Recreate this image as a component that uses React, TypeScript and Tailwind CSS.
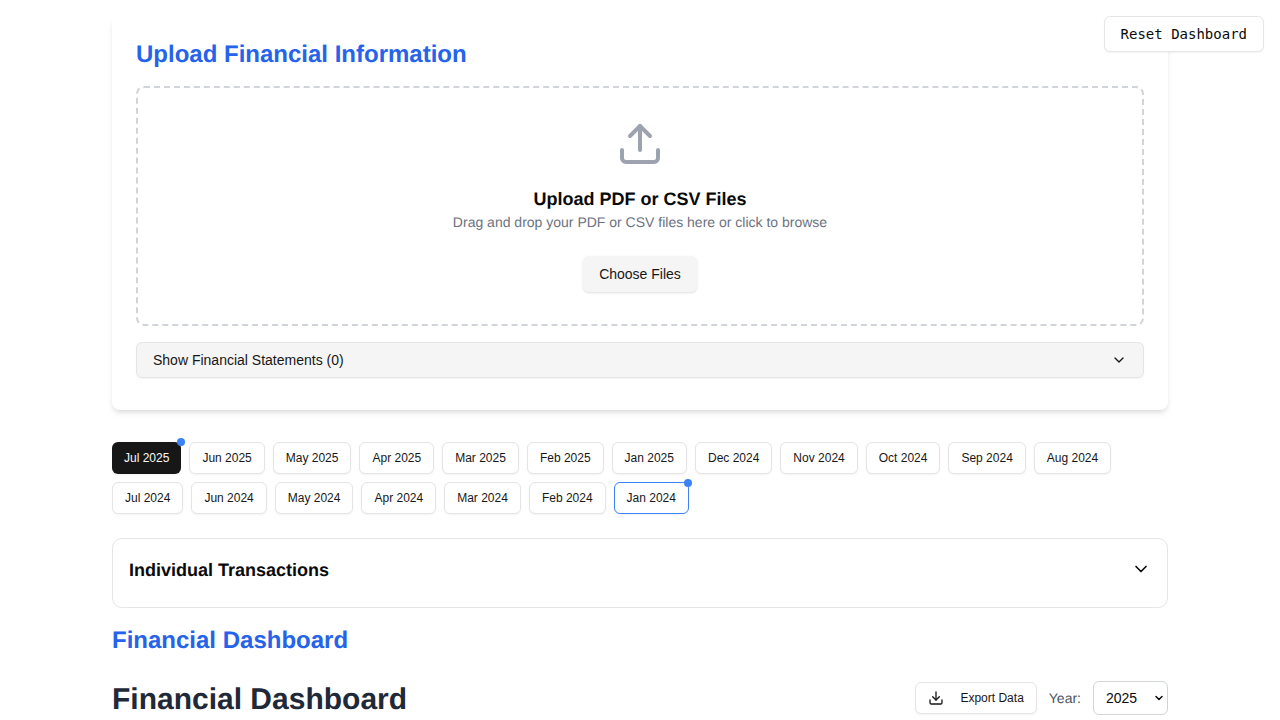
import { ChevronDown, Download, Upload } from "lucide-react";

const row1 = ["Jul 2025", "Jun 2025", "May 2025", "Apr 2025", "Mar 2025", "Feb 2025", "Jan 2025", "Dec 2024", "Nov 2024", "Oct 2024", "Sep 2024", "Aug 2024"];
const row2 = ["Jul 2024", "Jun 2024", "May 2024", "Apr 2024", "Mar 2024", "Feb 2024", "Jan 2024"];
const months = [...row1, ...row2];

function MonthButton({ label }: { label: string }) {
  const active = label === "Jul 2025";
  const outlined = label === "Jan 2024";
  return (
    <button
      className={
        "relative h-8 rounded-md px-3 text-xs shadow-xs " +
        (active
          ? "bg-[#171717] text-[#fafafa]"
          : outlined
            ? "border border-[#3b82f6] bg-white text-[#171717]"
            : "border border-[#e5e5e5] bg-white text-[#171717]")
      }
    >
      {label}
      {(active || outlined) && (
        <span className="absolute -right-[4px] -top-[4px] h-2 w-2 rounded-full bg-[#3b82f6]" />
      )}
    </button>
  );
}

export default function App() {
  return (
    <div className="relative h-[720px] overflow-hidden bg-white font-['Liberation_Sans',Arial,sans-serif] text-[#0a0a0a] antialiased [text-rendering:geometricPrecision]">
      <button className="absolute right-4 top-4 z-10 h-9 rounded-md border border-[#e5e5e5] bg-white px-4 font-['DejaVu_Sans_Mono',monospace] text-sm shadow-xs">
        Reset Dashboard
      </button>

      <div className="mx-auto w-[1056px] pt-4">
        <div className="rounded-lg bg-white p-6 pb-8 shadow-md">
          <h2 className="mb-[17px] mt-[1px] text-2xl font-bold leading-7 text-[#2563eb]">Upload Financial Information</h2>
          <div className="flex h-[240px] flex-col items-center rounded-lg border-2 border-dashed border-[#d1d5db] pt-[32px]">
            <Upload className="h-12 w-12 text-[#9ca3af]" strokeWidth={2} />
            <h3 className="-mb-[1px] mt-[17px] text-lg font-bold leading-7">Upload PDF or CSV Files</h3>
            <p className="text-sm leading-5 text-[#6b7280]">Drag and drop your PDF or CSV files here or click to browse</p>
            <button className="mt-6 h-9 rounded-md bg-[#f5f5f5] px-4 text-sm text-[#171717] shadow-sm">Choose Files</button>
          </div>
          <button className="mt-4 flex h-9 w-full items-center justify-between rounded-md border border-[#e5e5e5] bg-[#f5f5f5] px-4 text-sm text-[#171717] shadow-xs">
            Show Financial Statements (0)
            <ChevronDown className="h-4 w-4" />
          </button>
        </div>

        <div className="mt-8 flex flex-wrap gap-2">
          {months.map((m) => (
            <MonthButton key={m} label={m} />
          ))}
        </div>

        <div className="mt-6 flex h-[70px] items-start justify-between rounded-[10px] border border-[#e5e5e5] bg-white px-4 pt-[17px]">
          <h3 className="text-lg font-bold leading-7">Individual Transactions</h3>
          <ChevronDown className="mt-[3px] h-5 w-5" />
        </div>

        <h2 className="mt-[17px] text-2xl font-bold leading-8 text-[#2563eb]">Financial Dashboard</h2>

        <div className="mt-[23px] flex h-9 items-center justify-between">
          <h1 className="mt-[4px] text-3xl font-bold leading-9 text-[#1f2937]">Financial Dashboard</h1>
          <div className="flex items-center gap-3">
            <button className="flex h-8 items-center gap-4 rounded-md border border-[#e5e5e5] bg-white px-3 text-xs text-[#171717] shadow-xs">
              <Download className="h-4 w-4" />
              <span>Export Data</span>
            </button>
            <span className="text-sm text-[#4b5563]">Year:</span>
            <div className="relative">
              <select defaultValue="2025" className="block h-[34px] w-[75px] appearance-none rounded-md border border-[#d1d5db] bg-white px-3 text-sm text-[#0a0a0a]">
                <option>2025</option>
                <option>2024</option>
              </select>
              <ChevronDown className="pointer-events-none absolute right-[3px] top-[11px] h-3 w-3" strokeWidth={3} />
            </div>
          </div>
        </div>
      </div>
    </div>
  );
}
